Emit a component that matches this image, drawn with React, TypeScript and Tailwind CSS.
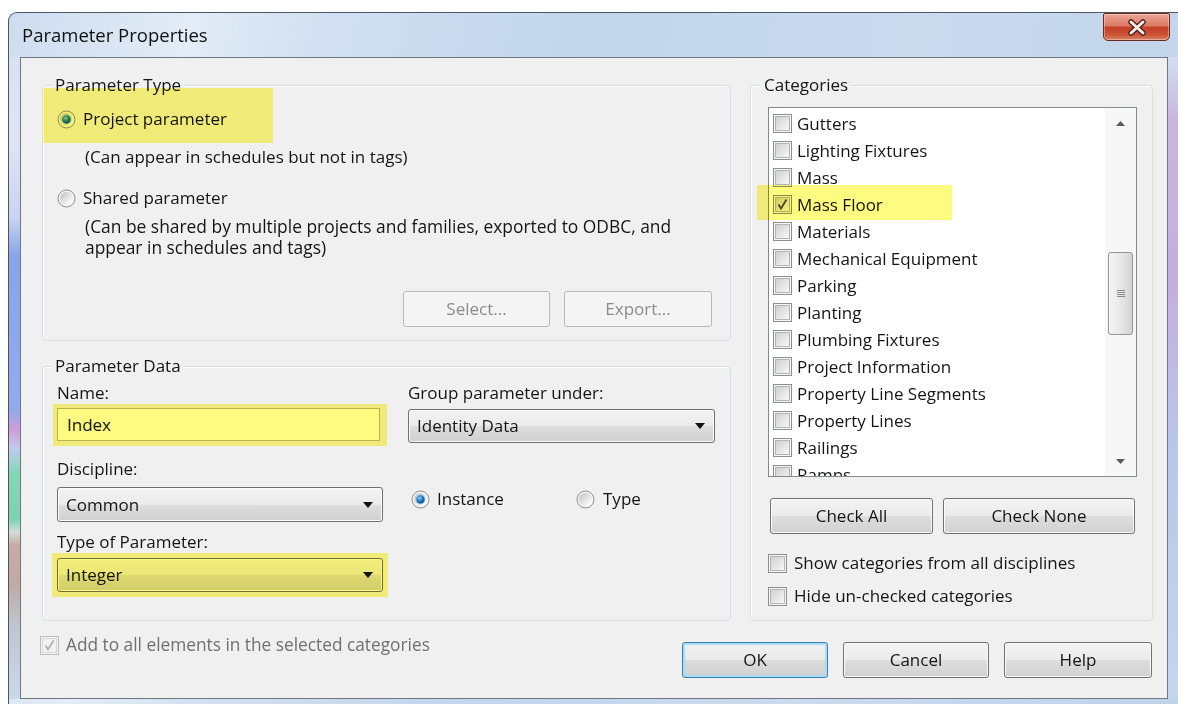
import React from "react";

const CATEGORIES = [
  "Gutters",
  "Lighting Fixtures",
  "Mass",
  "Mass Floor",
  "Materials",
  "Mechanical Equipment",
  "Parking",
  "Planting",
  "Plumbing Fixtures",
  "Project Information",
  "Property Line Segments",
  "Property Lines",
  "Railings",
  "Ramps",
];

// highlighter stroke laid over a control
function Marker({ className }: { className: string }) {
  return <span className={`pointer-events-none absolute bg-[#fffa80] mix-blend-multiply ${className}`} />;
}

function Radio({ on = false }: { on?: boolean }) {
  return (
    <svg width="19" height="19" viewBox="0 0 19 19" className="shrink-0">
      <defs>
        <linearGradient id="radio-face" x1="0.15" y1="0.15" x2="0.85" y2="0.85">
          <stop offset="0" stopColor="#c9c9c9" />
          <stop offset="1" stopColor="#fbfbfb" />
        </linearGradient>
        <radialGradient id="radio-dot" cx="0.4" cy="0.35" r="0.75">
          <stop offset="0" stopColor="#8fd0f5" />
          <stop offset="0.5" stopColor="#1f72b8" />
          <stop offset="1" stopColor="#0b4680" />
        </radialGradient>
      </defs>
      <circle cx="9.5" cy="9.5" r="8.5" fill="#f5f5f5" stroke="#8b8b8b" />
      <circle cx="9.5" cy="9.5" r="6.6" fill="url(#radio-face)" />
      {on && <circle cx="9.5" cy="9.5" r="4.4" fill="url(#radio-dot)" stroke="#6fb6e0" strokeWidth="0.8" />}
    </svg>
  );
}

function Checkbox({ checked = false, disabled = false }: { checked?: boolean; disabled?: boolean }) {
  return (
    <span
      className={`flex h-[19px] w-[19px] shrink-0 items-center justify-center border p-[1px] ${
        disabled ? "border-[#bdbdbd] bg-[#f4f4f4]" : "border-[#8e8f8f] bg-[#f6f6f6]"
      }`}
    >
      <span
        className={`flex h-full w-full items-center justify-center border ${
          disabled
            ? "border-[#d6d6d6] bg-[#f2f2f2]"
            : "border-[#b4b4b4] bg-[linear-gradient(135deg,#d0d0d0,#f7f7f7)]"
        }`}
      >
        {checked && (
          <svg width="13" height="13" viewBox="0 0 13 13">
            <path
              d="M2.5 6.5 L5 10.5 L10.5 1.5"
              fill="none"
              stroke={disabled ? "#b3b3b3" : "#4a4a4a"}
              strokeWidth="1.8"
            />
          </svg>
        )}
      </span>
    </span>
  );
}

function Button({
  label,
  className,
  disabled = false,
  focused = false,
}: {
  label: string;
  className: string;
  disabled?: boolean;
  focused?: boolean;
}) {
  let look =
    "border-[#707070] bg-[linear-gradient(#f3f3f3_0%,#ebebeb_50%,#dedede_50%,#d1d1d1_100%)] shadow-[inset_0_0_0_1px_#fbfbfb] text-[#151515]";
  if (disabled) look = "border-[#b5b9bc] bg-[#f4f4f4] text-[#8b8b8b]";
  if (focused)
    look =
      "border-[#3c7fb1] bg-[linear-gradient(#f1f1f1_0%,#eaeaea_50%,#dcdcdc_50%,#d0d0d0_100%)] shadow-[inset_0_0_0_2px_#a8ddf6] text-[#151515]";
  return (
    <div className={`flex h-[36px] items-center justify-center rounded-[3px] border ${look} ${className}`}>
      {label}
    </div>
  );
}

function Dropdown({ value, className }: { value: string; className: string }) {
  return (
    <div
      className={`flex items-center rounded-[3px] border border-[#707070] bg-[linear-gradient(#f3f3f3_0%,#ebebeb_50%,#dedede_50%,#d0d0d0_100%)] pl-[8px] pr-[9px] shadow-[inset_0_0_0_1px_#fbfbfb] ${className}`}
    >
      <span className="flex-1">{value}</span>
      <svg width="10" height="6" viewBox="0 0 10 6">
        <path d="M0 0 H10 L5 6 Z" fill="#111" />
      </svg>
    </div>
  );
}

function Legend({ text, className }: { text: string; className: string }) {
  return (
    <div className={`-mt-[11px] w-fit bg-[#f0f0f0] px-[3px] leading-[20px] ${className}`}>{text}</div>
  );
}

function ScrollBar() {
  return (
    <div className="flex w-[31px] shrink-0 flex-col bg-[#f7f7f7]">
      <div className="flex h-[30px] items-center justify-center">
        <svg width="9" height="5" viewBox="0 0 9 5">
          <path d="M0 5 L4.5 0 L9 5 Z" fill="#5a5a5a" />
        </svg>
      </div>
      <div className="flex-1 pt-[114px]">
        <div className="mx-auto flex h-[83px] w-[25px] items-center justify-center rounded-[3px] border border-[#959595] bg-[linear-gradient(90deg,#f5f5f5,#e6e6e6_55%,#d3d3d3)]">
          <svg width="8" height="9" viewBox="0 0 8 9">
            <path d="M0 1.5 H8 M0 3.5 H8 M0 5.5 H8 M0 7.5 H8" stroke="#8a8a8a" strokeWidth="1" />
          </svg>
        </div>
      </div>
      <div className="flex h-[30px] items-center justify-center">
        <svg width="9" height="5" viewBox="0 0 9 5">
          <path d="M0 0 L9 0 L4.5 5 Z" fill="#5a5a5a" />
        </svg>
      </div>
    </div>
  );
}

export default function App() {
  return (
    <div className="h-[704px] w-[1178px] overflow-hidden bg-white font-['Open_Sans',sans-serif] text-[17px] text-[#151515]">
      {/* glass window frame */}
      <div className="ml-[8px] mt-[12px] flex h-[700px] w-[1180px] flex-col rounded-tl-[9px] border-l border-t border-[#4c5663] bg-[linear-gradient(100deg,#cddcef_0%,#e3ecf7_14%,#d2e0f1_24%,#c2d5eb_45%,#cbdbee_70%,#bed2ea_100%)]">
        <div className="flex h-[44px] shrink-0 items-start">
          <span className="pl-[13px] pt-[10px] text-[18.5px] leading-[24px] text-[#111]">Parameter Properties</span>
          <div className="ml-auto mr-[18px] flex h-[28px] w-[67px] items-center justify-center rounded-b-[5px] rounded-t-[2px] border border-[#6b2a20] bg-[linear-gradient(#eaa596_0%,#dc7a64_45%,#c43e24_52%,#cc5336_80%,#de8466_100%)] shadow-[inset_0_0_0_1px_rgba(255,255,255,0.35)]">
            <svg width="20" height="17" viewBox="0 0 20 17">
              <path d="M4 3 L16 14 M16 3 L4 14" stroke="#4a1d15" strokeWidth="5.5" strokeLinecap="round" />
              <path d="M4 3 L16 14 M16 3 L4 14" stroke="#f4ece9" strokeWidth="3" strokeLinecap="round" />
            </svg>
          </div>
        </div>

        <div className="flex shrink-0">
          <div className="w-[11px] bg-[linear-gradient(180deg,#d6e1f3_0%,#dde5f4_13%,#c9d4f1_25%,#8aa3e9_31%,#93aaee_55%,#cf9cd8_58%,#c0cbef_61%,#84d7b5_65%,#7fd3b0_72%,#d4ddd6_74%,#c6ada5_76%,#bfaaa4_82%,#c0c3cc_88%,#c8d9ec_100%)]" />

          {/* client area */}
          <div className="flex h-[642px] w-[1148px] flex-col border border-[#6e7883] bg-[#f0f0f0] pl-[21px] pr-[14px]">
            <div className="mt-[27px] flex gap-[19px]">
              {/* left column */}
              <div className="flex w-[689px] flex-col">
                <div className="relative h-[256px] rounded-[4px] border border-[#d5dfe5] pl-[14px] shadow-[inset_1px_1px_0_#fff]">
                  <Legend text="Parameter Type" className="-ml-[5px]" />
                  <div className="mt-[13px] flex h-[22px] items-center gap-[7px]">
                    <Radio on />
                    <span>Project parameter</span>
                  </div>
                  <div className="mt-[17px] pl-[28px] leading-[20px]">(Can appear in schedules but not in tags)</div>
                  <div className="mt-[20px] flex h-[22px] items-center gap-[7px]">
                    <Radio />
                    <span>Shared parameter</span>
                  </div>
                  <div className="mt-[7px] pl-[28px] text-[17.4px] leading-[21px]">
                    (Can be shared by multiple projects and families, exported to ODBC, and
                    <br />
                    appear in schedules and tags)
                  </div>
                  <div className="mt-[33px] flex justify-end gap-[14px] pr-[18px]">
                    <Button label="Select..." className="w-[147px]" disabled />
                    <Button label="Export..." className="w-[148px]" disabled />
                  </div>
                  <Marker className="left-0 top-[2px] h-[55px] w-[230px]" />
                </div>

                <div className="mt-[25px] h-[255px] rounded-[4px] border border-[#d5dfe5] pl-[14px] shadow-[inset_1px_1px_0_#fff]">
                  <Legend text="Parameter Data" className="-ml-[5px]" />
                  <div className="flex">
                    <div className="flex w-[326px] flex-col">
                      <div className="mt-[7px] leading-[20px]">Name:</div>
                      <div className="relative mt-[5px] flex h-[33px] w-[323px] items-center border border-[#b9b6a0] bg-white pl-[9px]">
                        Index
                        <Marker className="-bottom-[6px] -left-[5px] -right-[8px] -top-[5px]" />
                      </div>
                      <div className="mt-[18px] leading-[20px]">Discipline:</div>
                      <Dropdown value="Common" className="mt-[8px] h-[35px] w-[326px]" />
                      <div className="mt-[10px] leading-[20px]">Type of Parameter:</div>
                      <div className="relative mt-[6px]">
                        <Dropdown value="Integer" className="h-[34px] w-[326px]" />
                        <Marker className="-bottom-[5px] -left-[5px] -right-[5px] -top-[5px]" />
                      </div>
                    </div>
                    <div className="ml-[25px] flex w-[308px] flex-col">
                      <div className="mt-[7px] leading-[20px]">Group parameter under:</div>
                      <Dropdown value="Identity Data" className="mt-[6px] h-[34px] w-[307px]" />
                      <div className="mt-[45px] flex h-[22px] items-center pl-[3px]">
                        <div className="flex w-[165px] items-center gap-[7px]">
                          <Radio on />
                          <span>Instance</span>
                        </div>
                        <div className="flex items-center gap-[8px]">
                          <Radio />
                          <span>Type</span>
                        </div>
                      </div>
                    </div>
                  </div>
                </div>
              </div>

              {/* right column */}
              <div className="relative h-[536px] w-[403px] rounded-[4px] border border-[#d5dfe5] pl-[17px] shadow-[inset_1px_1px_0_#fff]">
                <Legend text="Categories" className="-ml-[7px]" />
                <div className="mt-[12px] flex h-[370px] w-[369px] border border-[#828790] bg-white">
                  <div className="flex-1 overflow-hidden pt-[2px]">
                    {CATEGORIES.map((name) => (
                      <div key={name} className="flex h-[27px] items-center gap-[5px] pl-[4px]">
                        <Checkbox checked={name === "Mass Floor"} />
                        <span className="whitespace-nowrap">{name}</span>
                      </div>
                    ))}
                  </div>
                  <ScrollBar />
                </div>
                <div className="ml-[2px] mt-[21px] flex gap-[10px]">
                  <Button label="Check All" className="w-[163px]" />
                  <Button label="Check None" className="w-[192px]" />
                </div>
                <div className="mt-[18px] flex h-[22px] items-center gap-[7px]">
                  <Checkbox />
                  <span>Show categories from all disciplines</span>
                </div>
                <div className="mt-[11px] flex h-[22px] items-center gap-[7px]">
                  <Checkbox />
                  <span>Hide un-checked categories</span>
                </div>
                <Marker className="left-[6px] top-[99px] h-[35px] w-[195px]" />
              </div>
            </div>

            <div className="mt-[13px] flex items-start">
              <div className="-ml-[2px] flex h-[22px] items-center gap-[7px] text-[17.3px] text-[#707070]">
                <Checkbox checked disabled />
                <span>Add to all elements in the selected categories</span>
              </div>
              <div className="ml-auto mr-[1px] mt-[8px] flex gap-[15px]">
                <Button label="OK" className="w-[146px]" focused />
                <Button label="Cancel" className="w-[146px]" />
                <Button label="Help" className="w-[148px]" />
              </div>
            </div>
          </div>

          <div className="flex-1 bg-[linear-gradient(180deg,#d2dff0_0%,#c9b5dc_10%,#c6aee0_35%,#b9c6ea_60%,#c4d6ec_100%)]" />
        </div>
      </div>
    </div>
  );
}
